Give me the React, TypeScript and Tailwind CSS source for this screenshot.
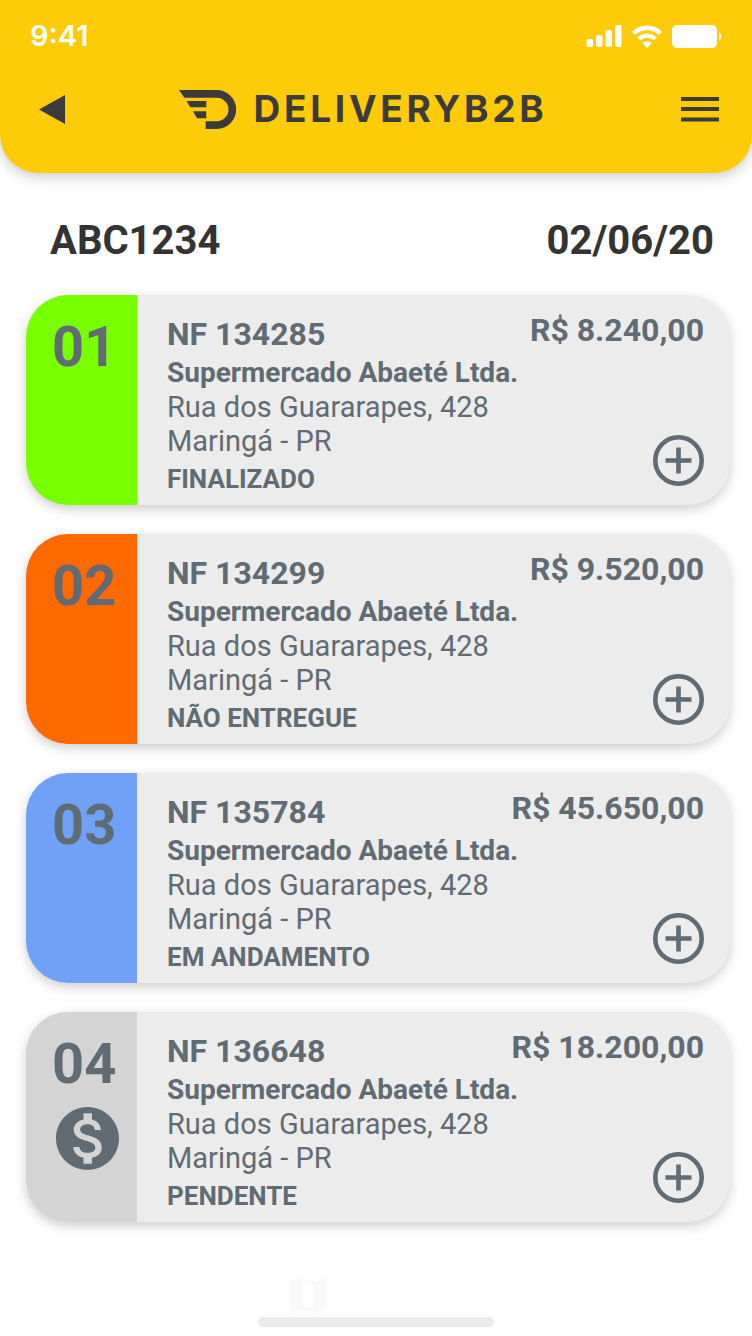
import React from "react";
import { MdMap, MdMonetizationOn } from "react-icons/md";

type Status = "FINALIZADO" | "NÃO ENTREGUE" | "EM ANDAMENTO" | "PENDENTE";

type Entrega = {
  ordem: string;
  nota: string;
  cliente: string;
  endereco: string;
  cidade: string;
  valor: string;
  status: Status;
};

const entregas: Entrega[] = [
  {
    ordem: "01",
    nota: "NF 134285",
    cliente: "Supermercado Abaeté Ltda.",
    endereco: "Rua dos Guararapes, 428",
    cidade: "Maringá - PR",
    valor: "R$ 8.240,00",
    status: "FINALIZADO",
  },
  {
    ordem: "02",
    nota: "NF 134299",
    cliente: "Supermercado Abaeté Ltda.",
    endereco: "Rua dos Guararapes, 428",
    cidade: "Maringá - PR",
    valor: "R$ 9.520,00",
    status: "NÃO ENTREGUE",
  },
  {
    ordem: "03",
    nota: "NF 135784",
    cliente: "Supermercado Abaeté Ltda.",
    endereco: "Rua dos Guararapes, 428",
    cidade: "Maringá - PR",
    valor: "R$ 45.650,00",
    status: "EM ANDAMENTO",
  },
  {
    ordem: "04",
    nota: "NF 136648",
    cliente: "Supermercado Abaeté Ltda.",
    endereco: "Rua dos Guararapes, 428",
    cidade: "Maringá - PR",
    valor: "R$ 18.200,00",
    status: "PENDENTE",
  },
];

const statusColor: Record<Status, string> = {
  FINALIZADO: "bg-[#78ff00]",
  "NÃO ENTREGUE": "bg-[#ff6900]",
  "EM ANDAMENTO": "bg-[#70a1f7]",
  PENDENTE: "bg-[#d4d4d4]",
};

function StatusBar() {
  return (
    <div className="flex items-center justify-between px-[30px] pt-5 text-white">
      <span className="font-['Inter',sans-serif] text-[29px] leading-8 font-semibold">
        9:41
      </span>
      <div className="flex items-center gap-[9px]">
        <svg className="h-[22px] w-9" viewBox="0 0 36 22" fill="currentColor">
          <rect x="0.5" y="14" width="6.5" height="8" rx="2" />
          <rect x="10" y="10" width="6.5" height="12" rx="2" />
          <rect x="19.5" y="5" width="6.5" height="17" rx="2" />
          <rect x="29" y="0" width="6.5" height="22" rx="2" />
        </svg>
        <svg className="h-[23px] w-8" viewBox="0 0 32 23" fill="none">
          <path d="M2.5 8.5a19 19 0 0 1 27 0" stroke="currentColor" strokeWidth="4.6" />
          <path d="M7.8 14a11.5 11.5 0 0 1 16.4 0" stroke="currentColor" strokeWidth="4.2" />
          <path d="M16 23l-4.8-4.8a7 7 0 0 1 9.6 0z" fill="currentColor" />
        </svg>
        <svg className="h-[23px] w-[50px]" viewBox="0 0 50 23" fill="currentColor">
          <rect x="0" y="0" width="45" height="23" rx="5" />
          <path d="M47 7.5c3 1 3 7 0 8z" />
        </svg>
      </div>
    </div>
  );
}

function Logo() {
  return (
    <div className="mr-5 flex items-center gap-[18px]">
      <svg className="h-[39px] w-[57px]" viewBox="0 0 171 117" fill="currentColor">
        <path d="M0 0H113A58.5 58.5 0 0 1 113 117H80V94H113A35.5 35.5 0 0 0 113 23H16Z" />
        <path d="M22 33H82V52H34Z" />
        <path d="M42 64H82V85H54Z" />
      </svg>
      <span className="font-['Inter',sans-serif] text-[37px] leading-10 font-bold tracking-widest">
        DELIVERYB2B
      </span>
    </div>
  );
}

function Header() {
  return (
    <header className="rounded-b-[38px] bg-[#fdcb08] pb-11 text-[#3b3b3b] shadow-[0_4px_14px_rgba(0,0,0,0.2)]">
      <StatusBar />
      <nav className="mt-[37px] flex items-center justify-between pl-[39px] pr-[33px]">
        <button type="button" aria-label="Voltar">
          <svg className="h-[29px] w-[26px]" viewBox="0 0 26 29" fill="currentColor">
            <path d="M0 14.5L26 0V29Z" />
          </svg>
        </button>
        <Logo />
        <button type="button" aria-label="Menu">
          <svg className="h-[26px] w-[38px]" viewBox="0 0 38 26" fill="currentColor">
            <rect y="1" width="38" height="4" />
            <rect y="11" width="38" height="4" />
            <rect y="21.5" width="38" height="4" />
          </svg>
        </button>
      </nav>
    </header>
  );
}

function EntregaCard({ entrega }: { entrega: Entrega }) {
  return (
    <li className="flex overflow-hidden rounded-[42px] bg-[#ececec] text-[#606b74] shadow-[0_4px_12px_rgba(0,0,0,0.2)]">
      <div className={"w-[111px] shrink-0 pl-[26px] pt-5 " + statusColor[entrega.status]}>
        <p className="text-[56px] leading-[64px] font-bold">{entrega.ordem}</p>
        {entrega.status == "PENDENTE" && (
          <MdMonetizationOn viewBox="2 2 20 20" className="mt-[11px] ml-1 size-[63px]" />
        )}
      </div>
      <div className="min-w-0 flex-1 pl-[30px] pt-[17px] pb-[5px] whitespace-nowrap">
        <h2 className="text-[32px] leading-[44px] font-bold">{entrega.nota}</h2>
        <p className="text-[28px] leading-[34px] font-bold">{entrega.cliente}</p>
        <p className="text-[29px] leading-[34px]">{entrega.endereco}</p>
        <p className="text-[29px] leading-[34px]">{entrega.cidade}</p>
        <p className="text-[26px] leading-[42px] font-bold">{entrega.status}</p>
      </div>
      <div className="flex shrink-0 flex-col items-end justify-between pt-[15px] pr-[26px] pb-[19px]">
        <p className="text-[32px] leading-10 font-bold">{entrega.valor}</p>
        <button type="button" aria-label={"Detalhes da " + entrega.nota}>
          <svg
            className="size-[51px]"
            viewBox="0 0 51 51"
            fill="none"
            stroke="currentColor"
            strokeWidth="4.6"
          >
            <circle cx="25.5" cy="25.5" r="23.2" />
            <path d="M25.5 12.5V38.5M12.5 25.5H38.5" />
          </svg>
        </button>
      </div>
    </li>
  );
}

export default function App() {
  return (
    <div className="flex min-h-screen flex-col bg-white font-['Roboto',sans-serif]">
      <Header />
      <main className="pr-[22px] pl-[26px]">
        <div className="mt-11 flex justify-between pr-4 pl-6 text-[40px] leading-[48px] font-bold text-[#333333]">
          <h1>ABC1234</h1>
          <time dateTime="2020-06-02">02/06/20</time>
        </div>
        <ul className="mt-[30px] flex flex-col gap-[29px]">
          {entregas.map((entrega) => (
            <EntregaCard key={entrega.ordem} entrega={entrega} />
          ))}
        </ul>
      </main>
      <footer className="mx-auto mt-auto w-59 pb-[9px]">
        <MdMap viewBox="3 3 18 18" className="ml-8 size-9 text-[#fafafa]" />
        <div className="mt-1 h-2.5 rounded-full bg-[#ebe9ea]" />
      </footer>
    </div>
  );
}
